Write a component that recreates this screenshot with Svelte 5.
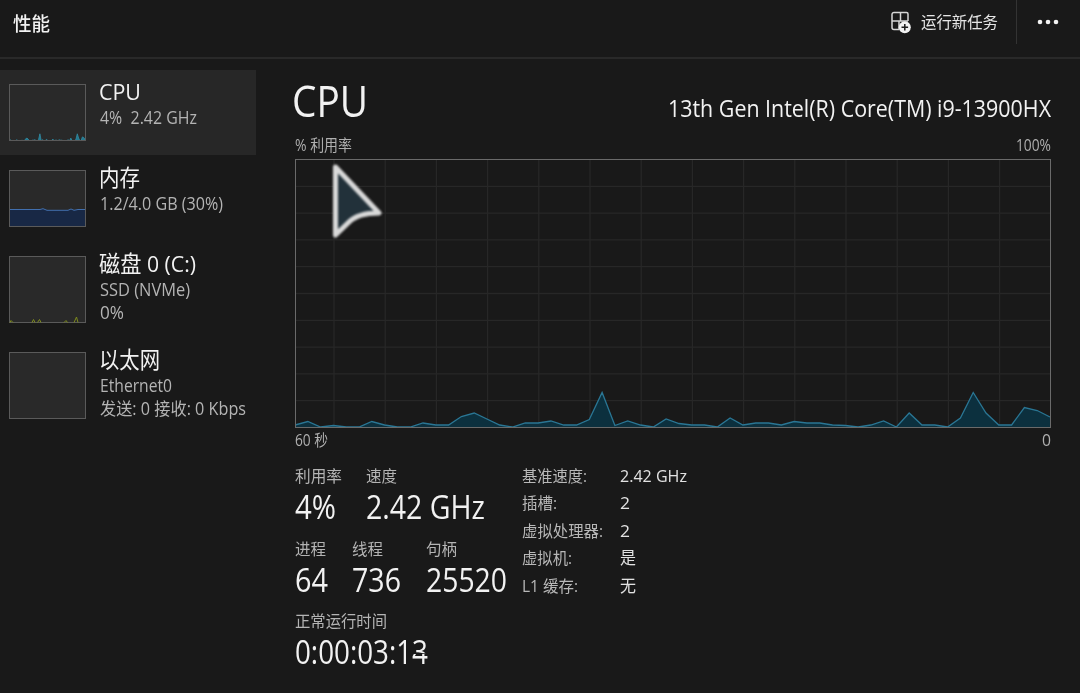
<script>
	const resources = [
		{ name: 'CPU', nameWidth: 42, lines: [{ text: '4%  2.42 GHz', width: 97 }], chart: 'cpu', height: 57 },
		{ name: '内存', nameWidth: 41, lines: [{ text: '1.2/4.0 GB (30%)', width: 123 }], chart: 'memory', height: 57 },
		{
			name: '磁盘 0 (C:)',
			nameWidth: 97,
			lines: [
				{ text: 'SSD (NVMe)', width: 90 },
				{ text: '0%', width: 24 }
			],
			chart: 'disk',
			height: 67
		},
		{
			name: '以太网',
			nameWidth: 61,
			lines: [
				{ text: 'Ethernet0', width: 72 },
				{ text: '发送: 0 接收: 0 Kbps', width: 146 }
			],
			chart: 'ethernet',
			height: 67
		}
	];

	const statRows = [
		[
			{ label: '利用率', labelWidth: 47, value: '4%', width: 41, cell: 71 },
			{ label: '速度', labelWidth: 31, value: '2.42 GHz', width: 119, cell: 130 }
		],
		[
			{ label: '进程', labelWidth: 31, value: '64', width: 33, cell: 57 },
			{ label: '线程', labelWidth: 31, value: '736', width: 49, cell: 74 },
			{ label: '句柄', labelWidth: 31, value: '25520', width: 81, cell: 90 }
		]
	];

	const details = [
		{ label: '基准速度:', labelWidth: 65, value: '2.42 GHz', width: 67 },
		{ label: '插槽:', labelWidth: 35, value: '2', width: 10 },
		{ label: '虚拟处理器:', labelWidth: 81, value: '2', width: 10 },
		{ label: '虚拟机:', labelWidth: 50, value: '是', width: 16 },
		{ label: 'L1 缓存:', labelWidth: 56, value: '无', width: 16 }
	];

	// one sample per second, in chart units above the baseline
	const usage = [
		2, 5.5, 0, 1.5, 0, 0, 5.5, 2, 0, 0, 4, 2, 2, 10.5, 14, 8, 2, 0, 4, 4, 6, 2, 2, 7.5, 34.5, 1.5, 6, 2, 0, 8,
		3.5, 2, 2, 0, 9, 2, 4, 4, 2, 5.5, 4, 4, 2, 1.5, 0, 2, 6, 0, 14, 2, 2, 0, 9, 34.5, 14, 2, 2, 19.5, 16.5, 10
	];

	const vertical = Array.from({ length: 14 }, (_, i) => 39 + i * 51.2);
	const horizontal = Array.from({ length: 9 }, (_, i) => 27.3 + i * 26.8);

	function line(width, height, scale) {
		return usage
			.map((v, i) => `${((i * width) / (usage.length - 1)).toFixed(1)},${(height - v * scale).toFixed(1)}`)
			.join(' ');
	}

	const mainLine = line(755, 268, 1);
	const thumbLine = line(76, 57, 0.21);

	// condenses or widens the glyphs so the text takes exactly the given width
	function fit(node, width) {
		const natural = node.getBoundingClientRect().width;
		node.style.transform = `scaleX(${width / natural})`;
		node.style.marginRight = `${width - natural}px`;
	}
</script>

<div class="window">
	<header class="toolbar">
		<h1><span class="fit" use:fit={37}>性能</span></h1>
		<div class="actions">
			<button class="run">
				<svg width="22" height="24" viewBox="0 0 22 24" fill="none">
					<path
						d="M9 19.500H4a2 2 0 0 1-2-2V4.500a2 2 0 0 1 2-2h12.500a1.500 1.500 0 0 1 1.500 1.500V11M10.500 2.500V11H18M2 11H9V19.500"
						stroke="#d6d6d6"
						stroke-width="1.500"
					/>
					<circle cx="14.800" cy="17.200" r="6" fill="#f2f2f2" />
					<path d="M14.800 13.900v6.600M11.500 17.200h6.600" stroke="#1b1b1b" stroke-width="1.500" />
				</svg>
				<span class="fit" use:fit={77}>运行新任务</span>
			</button>
			<button class="more" aria-label="more">
				<svg width="24" height="6" viewBox="0 0 24 6" fill="#f2f2f2">
					<circle cx="4" cy="3" r="2.300" />
					<circle cx="12" cy="3" r="2.300" />
					<circle cx="20" cy="3" r="2.300" />
				</svg>
			</button>
		</div>
	</header>

	<div class="body">
		<nav class="sidebar">
			{#each resources as item, i}
				<div class="item" class:selected={i === 0}>
					<svg class="thumb" width="77" height={item.height} viewBox="0 0 77 {item.height}">
						<rect class="back" width="77" height={item.height} />
						{#if item.chart === 'cpu'}
							<polygon points="0,57 {thumbLine} 76,57" fill="#24788f" stroke="#318ba3" stroke-width="0.8" />
						{:else if item.chart === 'memory'}
							<path d="M.5 39.500H31l3-.8 4 1.600H59l3-1.300 3 1.300 4-.8h7.500V57H.5z" fill="#182845" />
							<path d="M.5 39.500H31l3-.8 4 1.600H59l3-1.300 3 1.300 4-.8h7.500" fill="none" stroke="#416fae" />
						{/if}
						<rect class="outline" x="0.5" y="0.5" width="76" height={item.height - 1} />
						{#if item.chart === 'disk'}
							<path
								d="M1 66.500l1-2 2 2M23 66.500l1.500-3 1.500 3M28.500 66.500l2-3 1.500 3M55 66.500l2-2 1.500 2M65 66.500l2.500-5.500 1.500 5.500"
								fill="none"
								stroke="#7d8a1c"
							/>
						{/if}
					</svg>
					<div class="info">
						<div class="name"><span class="fit" use:fit={item.nameWidth}>{item.name}</span></div>
						{#each item.lines as row}
							<div class="sub"><span class="fit" use:fit={row.width}>{row.text}</span></div>
						{/each}
					</div>
				</div>
			{/each}
		</nav>

		<main class="detail">
			<div class="heading">
				<h2><span class="fit" use:fit={76}>CPU</span></h2>
				<div class="model"><span class="fit" use:fit={383}>13th Gen Intel(R) Core(TM) i9-13900HX</span></div>
			</div>

			<div class="axis top">
				<span class="fit" use:fit={57}>% 利用率</span>
				<span class="fit" use:fit={35}>100%</span>
			</div>

			<div class="chart">
				<svg width="756" height="269" viewBox="0 0 756 269">
					{#each vertical as x}
						<line class="grid" x1={x} x2={x} y1="0" y2="268" />
					{/each}
					{#each horizontal as y}
						<line class="grid" x1="0" x2="755" y1={y} y2={y} />
					{/each}
					<polygon points="0,268 {mainLine} 755,268" fill="#0c303e" />
					<polyline points={mainLine} fill="none" stroke="#2a7694" stroke-width="1.300" />
					<rect class="outline main" x="0.5" y="0.5" width="755" height="268" />
				</svg>
				<svg class="pointer" width="56" height="80" viewBox="0 0 56 80">
					<path
						d="M6.500 8L50 54Q29 54 20 63L6.500 76Z"
						fill="#22313a"
						stroke="#d9d9d9"
						stroke-width="5"
						stroke-linejoin="round"
					/>
				</svg>
			</div>

			<div class="axis bottom">
				<span class="fit" use:fit={33}>60 秒</span>
				<span class="fit" use:fit={9}>0</span>
			</div>

			<div class="stats">
				<div class="primary">
					{#each statRows as cells}
						<div class="row">
							{#each cells as cell}
								<div class="stat" style="width: {cell.cell}px">
									<div class="label"><span class="fit" use:fit={cell.labelWidth}>{cell.label}</span></div>
									<div class="value"><span class="fit" use:fit={cell.width}>{cell.value}</span></div>
								</div>
							{/each}
						</div>
					{/each}
					<div class="row">
						<div class="stat">
							<div class="label"><span class="fit" use:fit={92}>正常运行时间</span></div>
							<!-- the last digit is caught while it ticks over -->
							<div class="value">
								<span class="fit" use:fit={133}>0:00:03:1<span class="tick"><span class="next">4</span><span class="previous" aria-hidden="true">3</span></span></span>
							</div>
						</div>
					</div>
				</div>

				<dl class="secondary">
					{#each details as row}
						<dt><span class="fit" use:fit={row.labelWidth}>{row.label}</span></dt>
						<dd><span class="fit" use:fit={row.width}>{row.value}</span></dd>
					{/each}
				</dl>
			</div>
		</main>
	</div>
</div>

<style>
	:global(body) {
		background: #191919;
		overflow: hidden;
	}

	.window {
		height: 693px;
		background: #191919;
		color: #f2f2f2;
		font-family: 'Open Sans', 'Noto Sans CJK SC', sans-serif;
		font-size: 16px;
	}

	.fit {
		display: inline-block;
		white-space: pre;
		transform-origin: left center;
	}

	.toolbar {
		display: flex;
		justify-content: space-between;
		box-sizing: border-box;
		height: 59px;
		padding-left: 13px;
		border-bottom: 2px solid #292929;
	}

	h1 {
		margin: 0;
		font-size: 19px;
		font-weight: 500;
		line-height: 49px;
	}

	.actions {
		display: flex;
		height: 44px;
	}

	button {
		display: flex;
		align-items: center;
		padding: 0;
		border: 0;
		background: none;
		color: #e6e6e6;
		font: inherit;
	}

	.run {
		gap: 9px;
		padding-right: 18px;
		line-height: 44px;
	}

	.more {
		width: 64px;
		padding-left: 19px;
		border-left: 1px solid #333;
	}

	.body {
		display: flex;
	}

	.sidebar {
		width: 256px;
		padding-top: 11px;
	}

	.item {
		display: flex;
		gap: 13px;
		box-sizing: border-box;
		height: 86px;
		padding: 14px 0 0 9px;
	}

	.item:nth-child(n + 3) {
		height: 96px;
	}

	.item.selected {
		height: 85px;
		margin-bottom: 1px;
		background: #272727;
	}

	.thumb {
		flex: none;
	}

	.back {
		fill: #292929;
	}

	.outline {
		fill: none;
		stroke: #5a5a5a;
	}

	.outline.main {
		stroke: #6a6a6a;
	}

	.info {
		margin-top: -5px;
		white-space: nowrap;
	}

	.name {
		height: 26px;
		font-size: 22.5px;
		line-height: 26px;
	}

	.sub {
		height: 23px;
		padding-left: 1px;
		color: #b4b4b4;
		font-size: 17.5px;
		line-height: 24px;
	}

	.detail {
		width: 756px;
		margin-left: 39px;
	}

	.heading {
		display: flex;
		justify-content: space-between;
		height: 74px;
	}

	h2 {
		margin: 0 0 0 -3px;
		font-size: 44px;
		font-weight: 400;
		line-height: 82px;
	}

	.model {
		font-size: 24.5px;
		line-height: 97px;
	}

	.axis {
		display: flex;
		justify-content: space-between;
		color: #b0b0b0;
		font-size: 15.5px;
		line-height: 24px;
	}

	.axis.top {
		height: 26px;
	}

	.axis.bottom {
		height: 36px;
		line-height: 25px;
	}

	.chart {
		position: relative;
		height: 269px;
	}

	.chart svg {
		display: block;
	}

	.grid {
		stroke: #272727;
		stroke-width: 1.3;
	}

	.chart .pointer {
		position: absolute;
		left: 34px;
		top: 0;
		filter: blur(0.8px);
	}

	.stats {
		display: flex;
	}

	.primary {
		width: 227px;
	}

	.row {
		display: flex;
		height: 72.7px;
	}

	.stat {
		flex: none;
	}

	.label {
		height: 24px;
		color: #b4b4b4;
		font-size: 16px;
		line-height: 24px;
	}

	.value {
		height: 38px;
		font-size: 32.5px;
		line-height: 38px;
	}

	.tick {
		position: relative;
		display: inline-block;
	}

	.tick > span {
		display: inline-block;
	}

	.tick .next {
		clip-path: inset(54% 0 0 0);
	}

	.tick .previous {
		position: absolute;
		left: 0;
		top: 0;
		clip-path: inset(0 0 48% 0);
	}

	.secondary {
		display: grid;
		grid-template-columns: 98px auto;
		grid-auto-rows: 27.4px;
		margin: 0;
		line-height: 24px;
	}

	dt {
		color: #b8b8b8;
	}

	dd {
		margin: 0;
		color: #e2e2e2;
		font-size: 16.5px;
	}
</style>
